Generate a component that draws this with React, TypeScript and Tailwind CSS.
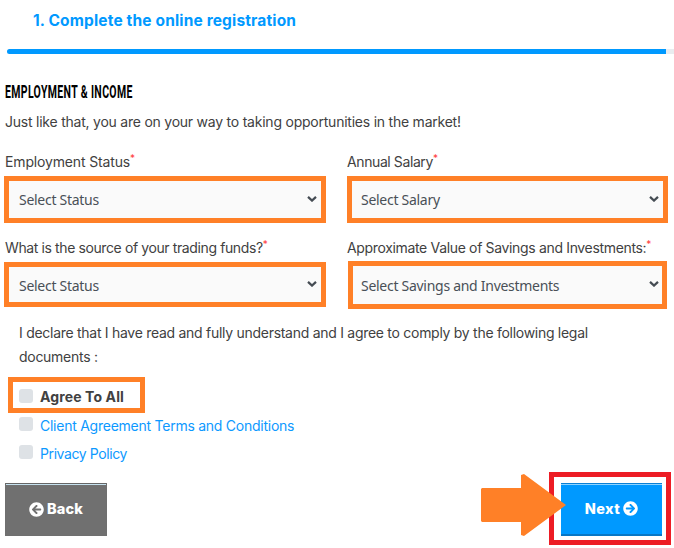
import type { ReactNode } from 'react';
import { FaArrowCircleLeft, FaArrowCircleRight } from 'react-icons/fa';

function Label({ children, className }: { children: ReactNode; className: string }) {
  return (
    <label className="flex h-[23px] items-center whitespace-nowrap text-[14px]">
      <span className={className}>{children}</span>
      <span className="mb-2 text-[10px] leading-none text-[#ff3b3b]">*</span>
    </label>
  );
}

function Select({ text, className, textClass = '' }: { text: string; className: string; textClass?: string }) {
  return (
    <div
      className={`flex items-center justify-between border-[5px] border-[#ff8027] bg-[#fafafa] font-['Noto_Sans',sans-serif] text-[14px] tracking-[-0.28px] text-[#495057] ${className}`}
    >
      <span className={`leading-5 whitespace-nowrap ${textClass}`}>{text}</span>
      <svg width="10" height="6" viewBox="0 0 10 6" className="mb-0.5 shrink-0" fill="none" stroke="#454c53" strokeWidth="2.2">
        <path d="M1 0.9 L5 4.6 L9 0.9" />
      </svg>
    </div>
  );
}

function Box() {
  return <span className="h-3.5 w-3.5 shrink-0 rounded-[3px] bg-[#dee2e6]" />;
}

export default function App() {
  return (
    <main className="relative h-[548px] w-[674px] overflow-hidden bg-white font-['Inter',sans-serif] text-[14px] text-[#414141]">
      <header className="h-[49px] pt-[9px] pl-[33px]">
        <h1 className="text-[15.5px] leading-6 font-bold tracking-[0.15px] whitespace-nowrap text-[#0099ff]">
          1. Complete the online registration
        </h1>
      </header>
      <div className="ml-[7px] h-[5px] overflow-hidden rounded-l-full bg-[#e9ecef]">
        <div className="h-full w-[659px] bg-[#0099ff]" />
      </div>
      <section className="pt-[26px] pl-[5px]">
        <h2 className="h-6 w-max origin-left scale-x-[0.583] font-['Roboto',sans-serif] text-[18px] leading-6 font-bold tracking-[0.6px] whitespace-nowrap text-black">
          EMPLOYMENT &amp; INCOME
        </h2>
        <p className="mt-1.5 h-6 leading-6 tracking-[-0.23px] whitespace-nowrap">
          Just like that, you are on your way to taking opportunities in the market!
        </p>
      </section>
      <section className="mt-4 grid h-[159px] grid-cols-[343px_1fr] grid-rows-[86px_73px] pl-1">
        <div className="pl-px">
          <Label className="tracking-[-0.15px]">Employment Status</Label>
          <Select text="Select Status" className="mt-[3px] -ml-px h-[47px] w-[322px] pr-1 pl-[10px]" />
        </div>
        <div>
          <Label className="tracking-[-0.4px]">Annual Salary</Label>
          <Select text="Select Salary" className="mt-[3px] h-[47px] w-[321px] pr-1 pl-[9px]" />
        </div>
        <div className="pl-px">
          <Label className="tracking-[-0.39px]">What is the source of your trading funds?</Label>
          <Select text="Select Status" className="mt-[3px] -ml-px h-[45px] w-[322px] pr-1 pl-[10px]" textClass="pt-0.5" />
        </div>
        <div>
          <Label className="tracking-[-0.34px]">Approximate Value of Savings and Investments:</Label>
          <Select text="Select Savings and Investments" className="mt-0.5 ml-px h-12 w-[319px] pr-[3px] pl-2" textClass="pt-0.5" />
        </div>
      </section>
      <section className="pt-[12px] pl-2">
        <p className="h-12 pl-[11px] leading-6 tracking-[-0.28px] whitespace-nowrap">
          I declare that I have read and fully understand and I agree to comply by the following legal
          <br />
          documents :
        </p>
        <label className="mt-2 flex h-9 w-[137px] items-center gap-[7px] border-[5px] border-[#ff8027] pt-px pl-1.5 font-bold">
          <Box />
          <span className="pt-0.5 tracking-[0.12px] whitespace-nowrap">Agree To All</span>
        </label>
        <label className="mt-[-1px] flex h-6 items-center gap-[7px] pl-[11px]">
          <Box />
          <span className="pt-0.5 tracking-[-0.25px] whitespace-nowrap text-[#0d99ff]">Client Agreement Terms and Conditions</span>
        </label>
        <label className="mt-1 flex h-6 items-center gap-[7px] pl-[11px]">
          <Box />
          <span className="pt-0.5 tracking-[-0.4px] whitespace-nowrap text-[#0d99ff]">Privacy Policy</span>
        </label>
      </section>
      <footer className="mt-[8px] flex h-[73px] items-center justify-between pr-[3px] pl-[5px]">
        <button className="mt-0.5 flex h-[53px] w-[102px] flex-col border border-[#6f6f6f] border-t-[#666] bg-[#707070] text-[14.5px] font-extrabold text-white">
          <span className="h-px w-full bg-[#c6e2ef]" />
          <span className="flex w-full flex-1 items-center justify-center gap-[3px] pb-0.5">
            <FaArrowCircleLeft size={15} />
            <span className="tracking-[0.2px]">Back</span>
          </span>
        </button>
        <div className="h-[73px] w-[122px] border-[5px] border-[#ed1c24] pt-[6px] pl-[7px]">
          <button className="flex h-[53px] w-[101px] flex-col border-t border-b-2 border-t-[#0a80d5] border-b-[#0877c5] bg-[#0099ff] text-[14.5px] font-extrabold text-white">
            <span className="h-px w-full bg-[#8fd4ff]" />
            <span className="flex w-full flex-1 items-center justify-center gap-[3px] pb-0.5">
              <span className="tracking-[0.4px]">Next</span>
              <FaArrowCircleRight size={15} />
            </span>
          </button>
        </div>
      </footer>
      <svg className="absolute top-[474px] left-[481px]" width="85" height="62" viewBox="0 0 85 62" fill="#ff8027">
        <path d="M1 14 H40 V1 L43 0 L85 31 L43 62 L40 61 V48 H1 L0 47 V15 Z" />
      </svg>
    </main>
  );
}
